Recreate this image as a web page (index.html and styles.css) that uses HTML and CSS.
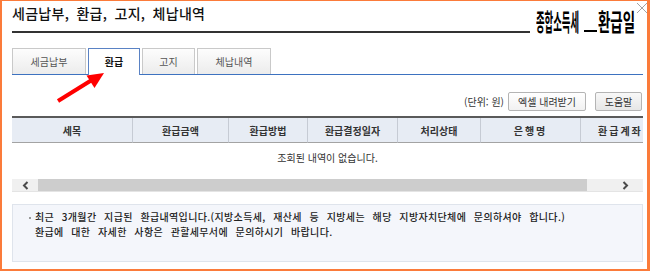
FILE: index.html
```html
<!DOCTYPE html>
<html lang="ko">
<head>
    <meta charset="UTF-8">
    <meta name="viewport" content="width=device-width, initial-scale=1.0">
    <title>세금납부, 환급, 고지, 체납내역</title>
    <link rel="stylesheet" href="styles.css">
</head>
<body>
    <div class="page">
        <div class="head">
            <h1 class="title">세금납부, 환급, 고지, 체납내역</h1>
            <div class="memo">
                <span class="memo-a">종합소득세</span>
                <span class="memo-line"></span>
                <span class="memo-b">환급일</span>
            </div>
        </div>

        <svg class="close" width="14" height="13" viewBox="0 0 14 13">
            <path d="M2 1 L12 11 M12 1 L2 11" stroke="#a3a3a3" stroke-width="1" fill="none"/>
        </svg>

        <div class="tabs">
            <a class="tab tab-wide">세금납부</a>
            <a class="tab tab-on">환급</a>
            <a class="tab tab-mid">고지</a>
            <a class="tab tab-wide">체납내역</a>
        </div>

        <div class="tools">
            <span class="unit">(단위: 원)</span>
            <button class="btn btn-xls">엑셀 내려받기</button>
            <button class="btn btn-help">도움말</button>
        </div>

        <div class="grid-wrap">
            <table class="grid">
                <colgroup>
                    <col style="width:121px">
                    <col style="width:96px">
                    <col style="width:79px">
                    <col style="width:90px">
                    <col style="width:83px">
                    <col style="width:100px">
                    <col style="width:110px">
                </colgroup>
                <thead>
                    <tr>
                        <th>세목</th>
                        <th>환급금액</th>
                        <th>환급방법</th>
                        <th>환급결정일자</th>
                        <th>처리상태</th>
                        <th class="spaced">은행명</th>
                        <th class="last">환급계좌</th>
                    </tr>
                </thead>
            </table>
            <div class="empty">조회된 내역이 없습니다.</div>
            <div class="hscroll">
                <span class="hs-btn">
                    <svg width="7" height="9" viewBox="0 0 7 9"><path d="M5.5 1 L2 4.5 L5.5 8" stroke="#4a4a4a" stroke-width="2" fill="none"/></svg>
                </span>
                <span class="hs-thumb"></span>
                <span class="hs-rest">
                    <svg width="7" height="9" viewBox="0 0 7 9"><path d="M1.5 1 L5 4.5 L1.5 8" stroke="#4a4a4a" stroke-width="2" fill="none"/></svg>
                </span>
            </div>
        </div>

        <div class="info">
            <p><span class="dot"></span>최근 3개월간 지급된 환급내역입니다.(지방소득세, 재산세 등 지방세는 해당 지방자치단체에 문의하셔야 합니다.)</p>
            <p>환급에 대한 자세한 사항은 관할세무서에 문의하시기 바랍니다.</p>
        </div>

        <!-- 빨간 화살표 -->
        <svg class="arrow" width="120" height="110" viewBox="0 0 120 110">
            <line x1="58" y1="101" x2="91" y2="80.5" stroke="#ff0000" stroke-width="4"/>
            <polygon points="104,73 86.5,75.5 94.5,88" fill="#ff0000"/>
        </svg>
    </div>
</body>
</html>
```

FILE: styles.css
```css
html, body {
    margin: 0;
    padding: 0;
}
body {
    font-family: "Noto Sans CJK KR", "Noto Sans", sans-serif;
    font-size: 10px;
    color: #333;
    background: #fff;
}
.page {
    position: relative;
    width: 650px;
    height: 271px;
    box-sizing: border-box;
    border: solid #fb7b3a;
    border-width: 1px 3px 2px 2px;
    padding: 0 4px 0 10px;
}
.head {
    display: flex;
    align-items: flex-start;
    height: 32px;
}
.title {
    flex: 1;
    margin: 0;
    height: 32px;
    box-sizing: border-box;
    padding-top: 2px;
    border-bottom: 2px solid #333;
    font-size: 14px;
    font-weight: 500;
    line-height: 20px;
    color: #111;
    word-spacing: 3px;
    letter-spacing: .3px;
}
.memo {
    display: flex;
    align-items: flex-end;
    width: 107px;
    margin-left: 6px;
    padding-top: 8px;
    font-size: 24px;
    font-weight: bold;
    line-height: 24px;
    color: #000;
    white-space: nowrap;
}
.memo-a {
    flex: none;
    width: 47px;
    transform: scaleX(.39);
    transform-origin: 0 50%;
}
.memo-line {
    flex: none;
    width: 13px;
    margin: 0 1px 1px;
    border-bottom: 2px solid #000;
}
.memo-b {
    flex: none;
    width: 40px;
    transform: scaleX(.56);
    transform-origin: 0 50%;
}
.close {
    position: absolute;
    left: 633px;
    top: 1px;
}
.tabs {
    display: flex;
    align-items: flex-start;
    gap: 2px;
    height: 26px;
    margin-top: 15px;
    border-bottom: 1px solid #3d72c0;
}
.tab {
    box-sizing: border-box;
    width: 52px;
    height: 26px;
    border: 1px solid #c9c9c9;
    border-bottom: 0;
    background: linear-gradient(#fdfdfd, #ececec);
    color: #555;
    text-align: center;
    line-height: 25px;
}
.tab-wide {
    width: 74px;
}
.tab-mid {
    width: 53px;
}
.tab-on {
    height: 27px;
    margin-bottom: -1px;
    border-color: #5a82c4;
    background: #fff;
    color: #111;
    font-weight: bold;
}
.tools {
    display: flex;
    justify-content: flex-end;
    align-items: center;
    gap: 4px;
    height: 19px;
    margin-top: 17px;
    padding-right: 1px;
}
.unit {
    color: #333;
}
.btn {
    box-sizing: border-box;
    height: 19px;
    padding: 0;
    border: 1px solid #b4b4b4;
    border-radius: 2px;
    background: linear-gradient(#fff, #f1f1f1);
    font: inherit;
    color: #333;
}
.btn-xls {
    width: 78px;
}
.btn-help {
    width: 47px;
    margin-left: 5px;
    background: linear-gradient(#f8f8f8, #e6e6e6);
}
.grid-wrap {
    margin-top: 5px;
    overflow: hidden;
}
.grid {
    table-layout: fixed;
    width: 679px;
    border-collapse: separate;
    border-spacing: 0;
    border-top: 2px solid #5a5a5a;
}
.grid th {
    height: 24px;
    padding: 0;
    background: #e7ecf4;
    border-right: 1px solid #c6cbd4;
    border-bottom: 1px solid #a3a3a3;
    font-weight: bold;
    color: #333;
    white-space: nowrap;
}
.grid th.spaced {
    letter-spacing: 2px;
}
.grid th.last {
    border-right: 0;
    text-align: left;
    padding-left: 17px;
    letter-spacing: 2px;
}
.empty {
    height: 36px;
    line-height: 30px;
    text-align: center;
    color: #333;
}
.hscroll {
    display: flex;
    height: 12px;
    background: #f0f0f0;
    border-bottom: 1px solid #e4e4e4;
}
.hs-btn {
    display: flex;
    align-items: center;
    justify-content: center;
    width: 26px;
}
.hs-thumb {
    width: 549px;
    background: #cdcdcd;
}
.hs-rest {
    flex: 1;
    display: flex;
    align-items: center;
    justify-content: flex-end;
    padding-right: 14px;
}
.info {
    box-sizing: border-box;
    height: 58px;
    margin-top: 12px;
    padding: 4px 0 0 22px;
    border: 1px solid #dfe4ec;
    background: #f4f6fb;
    line-height: 15px;
    color: #222;
    font-weight: 500;
}
.info p {
    margin: 0;
    word-spacing: 4.5px;
    letter-spacing: .35px;
}
.dot {
    display: inline-block;
    width: 2px;
    height: 2px;
    margin: 0 4px 0 -6px;
    vertical-align: middle;
    background: #999;
}
.arrow {
    position: absolute;
    left: -2px;
    top: -1px;
    pointer-events: none;
}
```
